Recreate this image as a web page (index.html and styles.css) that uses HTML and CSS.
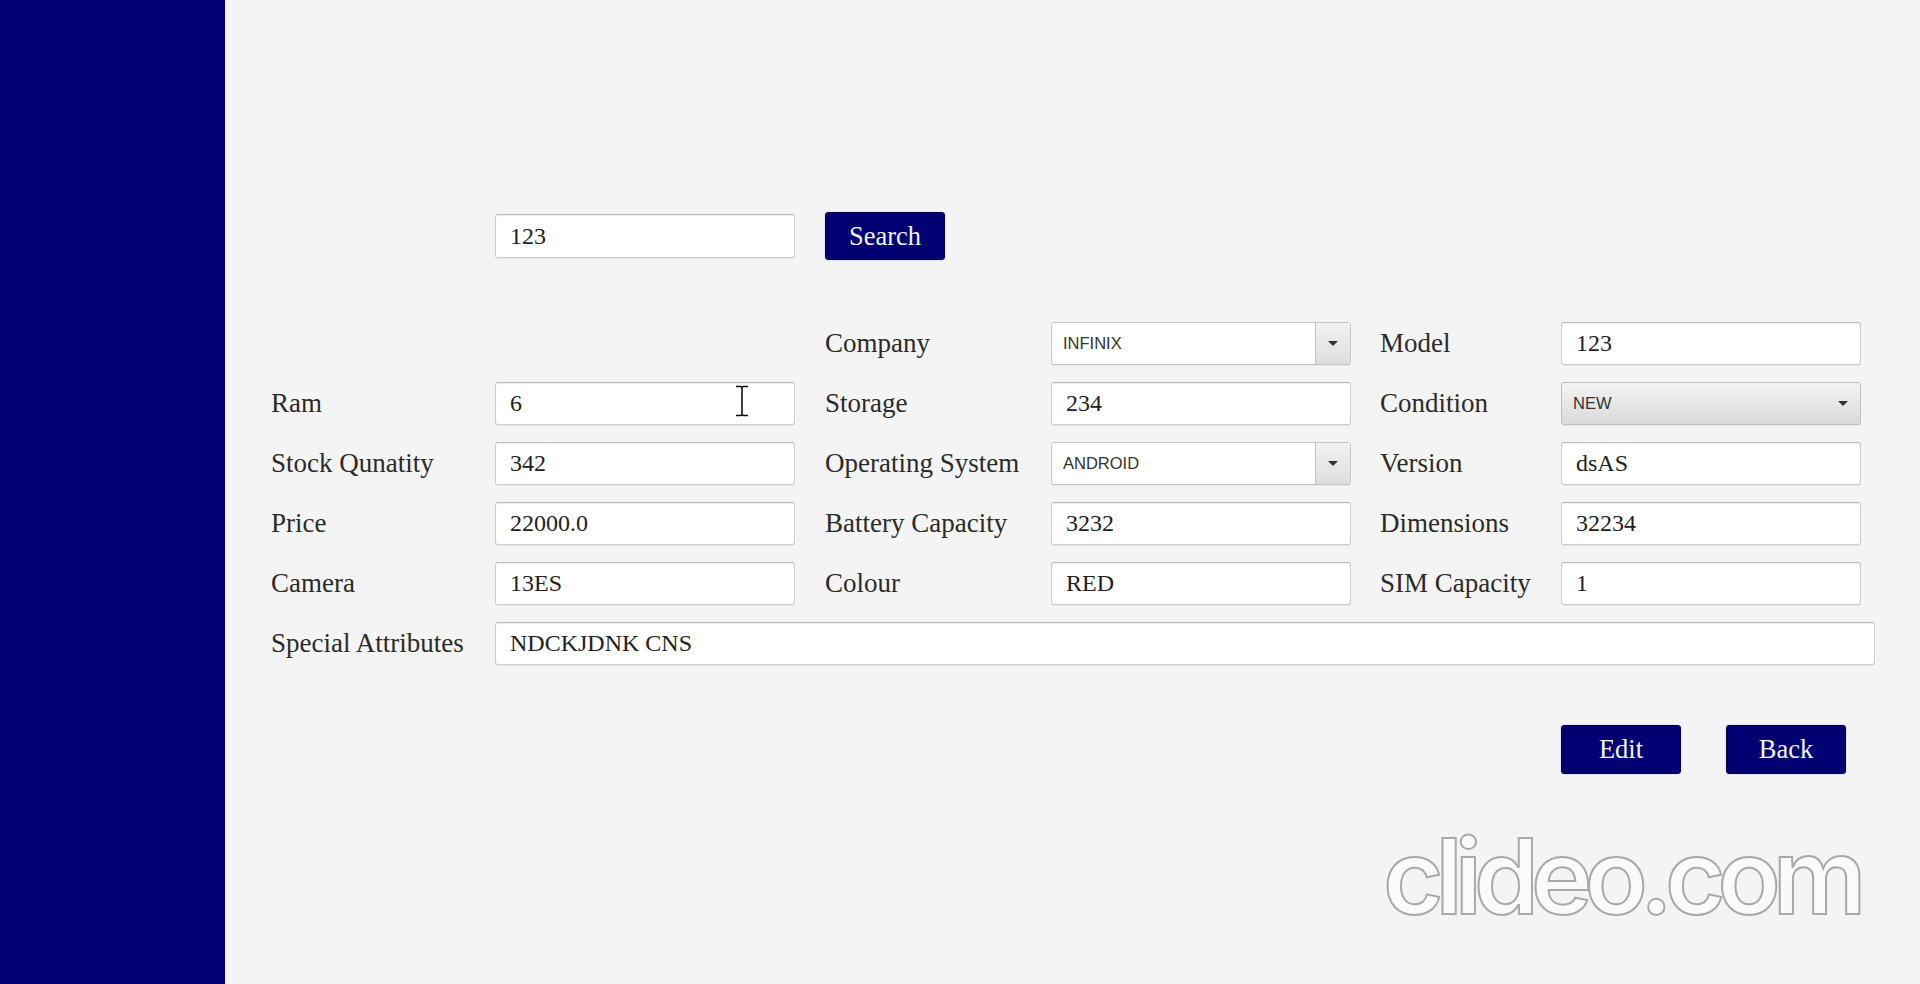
FILE: index.html
```html
<!DOCTYPE html>
<html lang="en">
<head>
<meta charset="utf-8">
<title>Phone Details</title>
<link rel="stylesheet" href="styles.css">
</head>
<body>
<div class="app">
  <aside class="sidebar"></aside>
  <main class="main">
    <div class="search-row">
      <div class="field search-field">123</div>
      <button class="btn search-btn">Search</button>
    </div>

    <div class="form-grid">
      <div></div><div></div>
      <div class="label">Company</div>
      <div class="combo editable"><span class="combo-text">INFINIX</span><span class="combo-arrow"><i class="tri"></i></span></div>
      <div class="label">Model</div>
      <div class="field">123</div>

      <div class="label">Ram</div>
      <div class="field">6</div>
      <div class="label">Storage</div>
      <div class="field">234</div>
      <div class="label">Condition</div>
      <div class="combo plain"><span class="combo-text">NEW</span><i class="tri"></i></div>

      <div class="label">Stock Qunatity</div>
      <div class="field">342</div>
      <div class="label">Operating System</div>
      <div class="combo editable"><span class="combo-text">ANDROID</span><span class="combo-arrow"><i class="tri"></i></span></div>
      <div class="label">Version</div>
      <div class="field">dsAS</div>

      <div class="label">Price</div>
      <div class="field">22000.0</div>
      <div class="label">Battery Capacity</div>
      <div class="field">3232</div>
      <div class="label">Dimensions</div>
      <div class="field">32234</div>

      <div class="label">Camera</div>
      <div class="field">13ES</div>
      <div class="label">Colour</div>
      <div class="field">RED</div>
      <div class="label">SIM Capacity</div>
      <div class="field">1</div>

      <div class="label">Special Attributes</div>
      <div class="field wide">NDCKJDNK CNS</div>
    </div>

    <div class="actions">
      <button class="btn">Edit</button>
      <button class="btn">Back</button>
    </div>
  </main>
</div>

<svg class="ibeam" width="16" height="32" viewBox="0 0 16 32" aria-hidden="true">
  <path d="M2 1.5 H6.5 Q8 1.5 8 3 V29 Q8 30.5 6.5 30.5 H2 M14 1.5 H9.5 Q8 1.5 8 3 M8 29 Q8 30.5 9.5 30.5 H14" fill="none" stroke="#111" stroke-width="1.6"/>
</svg>

<div class="watermark">clideo.com</div>
</body>
</html>
```

FILE: styles.css
```css
html, body {
  margin: 0;
  padding: 0;
  height: 100%;
}

body {
  background: #f4f4f4;
  font-family: "Liberation Serif", "Times New Roman", serif;
  color: #2b2b2b;
  overflow: hidden;
}

.app {
  display: flex;
  height: 984px;
}

.sidebar {
  width: 225px;
  flex: none;
  background: #000072;
}

.main {
  flex: 1;
  padding-left: 46px;
  padding-top: 212px;
  display: flex;
  flex-direction: column;
}

.search-row {
  display: flex;
  align-items: center;
  height: 48px;
  padding-left: 224px;
  gap: 30px;
}

.field {
  box-sizing: border-box;
  width: 300px;
  height: 43px;
  background: #fff;
  border: 1px solid #cdcdcd;
  border-top-color: #b9b9b9;
  border-radius: 3px;
  box-shadow: 0 1px 0 #e6e6e6, inset 0 1px 1px rgba(0,0,0,0.06);
  padding: 0 14px;
  display: flex;
  align-items: center;
  font-size: 24px;
  color: #222;
  white-space: nowrap;
}

.search-field {
  height: 44px;
}

.btn {
  box-sizing: border-box;
  width: 120px;
  height: 48px;
  background: #000072;
  color: #f3f3ff;
  border: 1px solid #000050;
  border-radius: 3px;
  font-family: "Liberation Serif", "Times New Roman", serif;
  font-size: 26.5px;
  padding: 0;
  cursor: default;
  box-shadow: 0 0 0 1px rgba(220,220,240,0.6);
}

.form-grid {
  margin-top: 62px;
  display: grid;
  grid-template-columns: 224px 330px 226px 329px 181px 300px;
  grid-auto-rows: 43px;
  row-gap: 17px;
  align-items: center;
}

.label {
  font-size: 27px;
  color: #2b2b2b;
  white-space: nowrap;
}

.field.wide {
  grid-column: 2 / -1;
  width: 1380px;
}

.combo {
  box-sizing: border-box;
  width: 300px;
  height: 43px;
  border-radius: 3px;
  display: flex;
  align-items: center;
  font-family: "Liberation Sans", Arial, sans-serif;
  font-size: 16.5px;
  color: #333;
  overflow: hidden;
}

.combo-text {
  flex: 1;
  padding-left: 11px;
}

.combo.editable {
  background: #fff;
  border: 1px solid #c6c6c6;
  box-shadow: 0 1px 0 #e6e6e6;
}

.combo-arrow {
  width: 34px;
  align-self: stretch;
  border-left: 1px solid #c4c4c4;
  background: linear-gradient(#f1f1f1, #dedede);
  display: flex;
  align-items: center;
  justify-content: center;
}

.combo.plain {
  background: linear-gradient(#f4f4f4, #dadada);
  border: 1px solid #bdbdbd;
  box-shadow: 0 1px 0 #e6e6e6;
  padding-right: 12px;
}

.tri {
  width: 0;
  height: 0;
  border-left: 5px solid transparent;
  border-right: 5px solid transparent;
  border-top: 5px solid #333;
}

.actions {
  margin-top: 60px;
  display: flex;
  justify-content: flex-end;
  gap: 45px;
  padding-right: 74px;
}

.actions .btn {
  height: 49px;
}

.ibeam {
  position: absolute;
  left: 734px;
  top: 385px;
}

.watermark {
  position: absolute;
  left: 1383px;
  top: 814px;
  font-family: Inter, "DejaVu Sans", sans-serif;
  font-weight: 600;
  font-size: 104px;
  letter-spacing: -8px;
  line-height: 1.2;
  color: #fafafa;
  -webkit-text-stroke: 2px #a9a9a9;
}
```
